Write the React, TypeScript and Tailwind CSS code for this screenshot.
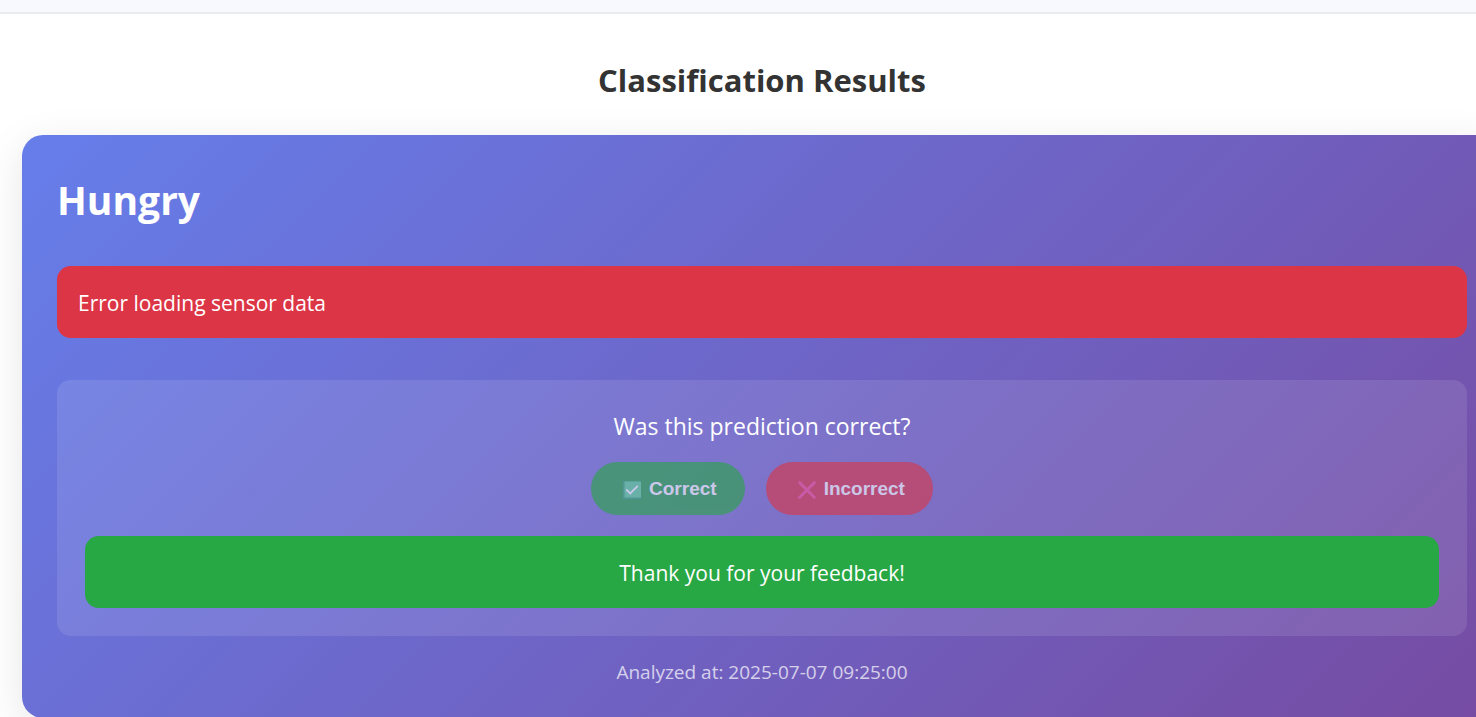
import React from "react";

function CheckIcon() {
  return (
    <svg aria-hidden="true" viewBox="0 0 18 20" className="h-5 w-[18px] shrink-0">
      <rect x="0" y="1" width="18" height="18" rx="1" fill="#34ad72" />
      <rect x="1.5" y="1.5" width="16.5" height="16" rx="0.5" fill="#5bd890" />
      <path d="M3.2 9.5 7.2 13.5 14.8 5.8" fill="none" stroke="#fff" strokeWidth="1.8" />
    </svg>
  );
}

function CrossIcon() {
  return (
    <svg aria-hidden="true" viewBox="0 0 18 20" className="h-5 w-[18px] shrink-0">
      <path d="M0.8 1.8 17.2 18.2M17.2 1.8 0.8 18.2" fill="none" stroke="#fb4d90" strokeWidth="2.8" />
    </svg>
  );
}

type FeedbackButtonProps = {
  icon: React.ReactNode;
  label: string;
  color: string;
};

function FeedbackButton({ icon, label, color }: FeedbackButtonProps) {
  return (
    <button
      type="button"
      disabled
      className={`flex h-[53px] items-center gap-2 rounded-full pt-0.5 pl-8 pr-7 font-['Liberation_Sans',Arial,sans-serif] text-[19px] font-bold text-white opacity-60 ${color}`}
    >
      {icon}
      {label}
    </button>
  );
}

export default function App() {
  return (
    <div className="min-h-screen overflow-hidden bg-white font-['Open_Sans','Noto_Sans',sans-serif]">
      <header className="h-[14px] border-b-2 border-[#e9ecef] bg-[#f8f9ff]" />
      <main className="-mr-[26px] ml-[22px]">
        <h2 className="pt-11 pb-8 text-center text-[31px] leading-[45px] font-bold text-[#333]">
          Classification Results
        </h2>
        <section className="rounded-[21px] bg-linear-[135deg,#667eea_0%,#764ba2_100%] px-[35px] pt-[35px] pb-8 text-white shadow-[0_10px_40px_rgba(0,0,0,0.1)]">
          <h3 className="mb-9 text-[39px] leading-[60px] font-bold">Hungry</h3>
          <p role="alert" className="rounded-[14px] bg-[#dc3545] px-[21px] pt-[21px] pb-[19px] text-[21px] leading-8">
            Error loading sensor data
          </p>
          <div className="mt-[42px] rounded-[14px] bg-white/10 p-7 text-center">
            <p className="mb-[18px] text-[23px] leading-9">Was this prediction correct?</p>
            <div className="flex justify-center gap-[21px]">
              <FeedbackButton icon={<CheckIcon />} label="Correct" color="bg-[#28a745]" />
              <FeedbackButton icon={<CrossIcon />} label="Incorrect" color="bg-[#dc3545]" />
            </div>
            <p role="status" className="mt-[21px] rounded-[14px] bg-[#28a745] px-[21px] pt-[21px] pb-[19px] text-[21px] leading-8">
              Thank you for your feedback!
            </p>
          </div>
          <p className="mt-[22px] text-center text-[19px] leading-7 opacity-70">
            Analyzed at: 2025-07-07 09:25:00
          </p>
        </section>
      </main>
    </div>
  );
}
